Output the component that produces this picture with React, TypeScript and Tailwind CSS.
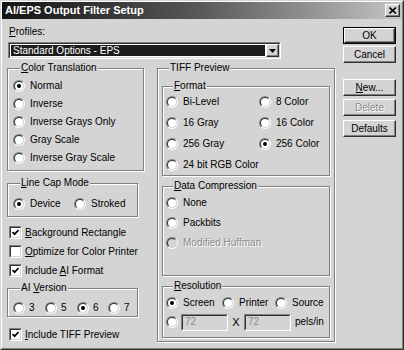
import React from 'react';

const FACE = 'bg-[#d4d4d4]';

function Radio({ checked = false, disabled = false }: { checked?: boolean; disabled?: boolean }) {
  return (
    <span className="inline-block w-[12px] h-[12px] shrink-0 rounded-full border border-t-[#808080] border-l-[#808080] border-b-white border-r-white">
      <span
        className={`flex items-center justify-center w-full h-full rounded-full border border-t-[#303030] border-l-[#303030] border-b-[#d4d4d4] border-r-[#d4d4d4] ${
          disabled ? 'bg-[#d4d4d4]' : 'bg-white'
        }`}
      >
        {checked && <span className="block w-[4px] h-[4px] rounded-full bg-black" />}
      </span>
    </span>
  );
}

function Check({ checked = false }: { checked?: boolean }) {
  return (
    <span className="inline-block w-[13px] h-[13px] shrink-0 border border-t-[#808080] border-l-[#808080] border-b-white border-r-white">
      <span className="flex items-center justify-center w-full h-full bg-white border border-t-[#303030] border-l-[#303030] border-b-[#d4d4d4] border-r-[#d4d4d4]">
        {checked && (
          <svg width="7" height="7" viewBox="0 0 7 7">
            <path d="M0.5 3 L2.6 5.2 L6.6 1" fill="none" stroke="#000" strokeWidth="1.7" />
          </svg>
        )}
      </span>
    </span>
  );
}

function U({ c }: { c: string }) {
  return <span className="underline underline-offset-[1px] decoration-[1px]">{c}</span>;
}

function RadioItem({
  label,
  checked,
  disabled,
  className = '',
}: {
  label: React.ReactNode;
  checked?: boolean;
  disabled?: boolean;
  className?: string;
}) {
  return (
    <div className={`flex items-center gap-[5px] ${className}`}>
      <Radio checked={checked} disabled={disabled} />
      <span className={disabled ? 'text-[#8c8c8c] [text-shadow:1px_1px_0_#fff]' : ''}>{label}</span>
    </div>
  );
}

function CheckItem({ label, checked }: { label: React.ReactNode; checked?: boolean }) {
  return (
    <div className="flex items-center gap-[3px] h-[19px] pl-[2px]">
      <Check checked={checked} />
      <span>{label}</span>
    </div>
  );
}

function Group({
  title,
  className = '',
  children,
}: {
  title: React.ReactNode;
  className?: string;
  children?: React.ReactNode;
}) {
  return (
    <fieldset
      className={`border border-[#808080] shadow-[inset_1px_1px_0_#fff,1px_1px_0_#fff] min-w-0 ${className}`}
    >
      <legend className={`ml-[7px] px-[1px] leading-[12px] h-[12px] ${FACE}`}>{title}</legend>
      {children}
    </fieldset>
  );
}

function Button({
  children,
  def = false,
  disabled = false,
  className = '',
}: {
  children: React.ReactNode;
  def?: boolean;
  disabled?: boolean;
  className?: string;
}) {
  const inner = (
    <div
      className={`flex items-center justify-center w-full h-full border border-t-white border-l-white border-b-[#303030] border-r-[#303030] shadow-[inset_-1px_-1px_0_#808080] ${
        disabled ? 'text-[#8c8c8c] [text-shadow:1px_1px_0_#fff]' : ''
      }`}
    >
      {children}
    </div>
  );
  return def ? (
    <div className={`w-[53px] h-[17px] border border-black ${className}`}>{inner}</div>
  ) : (
    <div className={`w-[53px] h-[17px] ${className}`}>{inner}</div>
  );
}

function Sunken({ children, className = '' }: { children?: React.ReactNode; className?: string }) {
  return (
    <div className={`border border-t-[#808080] border-l-[#808080] border-b-white border-r-white ${className}`}>
      <div className="w-full h-full border border-t-[#303030] border-l-[#303030] border-b-[#d4d4d4] border-r-[#d4d4d4]">
        {children}
      </div>
    </div>
  );
}

export default function App() {
  return (
    <div
      className={`w-[404px] h-[350px] ${FACE} text-[10px] leading-[12px] text-black font-['Liberation_Sans',Arial,sans-serif] border border-t-[#d4d4d4] border-l-[#d4d4d4] border-b-[#303030] border-r-[#303030] overflow-hidden`}
    >
      <div className="w-full h-full flex flex-col border border-t-white border-l-white border-b-[#808080] border-r-[#808080]">
        {/* Title bar */}
        <div className="h-[17px] shrink-0 flex items-center justify-between pl-[3px] pr-[2px] bg-gradient-to-r from-[#141414] via-[#5a5a5a] to-[#c6c6c6]">
          <span className="text-white font-bold text-[11px] leading-[13px]">AI/EPS Output Filter Setup</span>
          <div className="w-[15px] h-[13px] border border-t-white border-l-white border-b-[#303030] border-r-[#303030] shadow-[inset_-1px_-1px_0_#808080] bg-[#d4d4d4] flex items-center justify-center">
            <svg width="8" height="7" viewBox="0 0 8 7">
              <path d="M0.5 0.5 L7 6.5 M7 0.5 L0.5 6.5" stroke="#000" strokeWidth="1.6" />
            </svg>
          </div>
        </div>

        {/* Body */}
        <div className="flex flex-1 pl-[5px]">
          {/* Left part */}
          <div className="w-[328px] flex flex-col pt-[7px]">
            <div className="ml-[2px] h-[12px]">
              <U c="P" />
              rofiles:
            </div>
            <Sunken className="ml-[1px] mt-[4px] w-[273px] h-[17px]">
              <div className="flex h-full bg-white">
                <div className="flex-1 m-[1px] bg-[#1c1c1c] text-white pl-[2px] flex items-center">
                  Standard Options - EPS
                </div>
                <div className="w-[13px] h-full border border-t-white border-l-white border-b-[#303030] border-r-[#303030] shadow-[inset_-1px_-1px_0_#808080] bg-[#d4d4d4] flex items-center justify-center">
                  <svg width="7" height="4" viewBox="0 0 7 4">
                    <path d="M0 0 H7 L3.5 4 Z" fill="#000" />
                  </svg>
                </div>
              </div>
            </Sunken>

            <div className="flex gap-[13px] mt-[3px]">
              {/* Left column */}
              <div className="w-[137px] flex flex-col">
                <Group
                  title={
                    <>
                      <U c="C" />
                      olor Translation
                    </>
                  }
                  className="h-[109px] pl-[5px] pt-[3px]"
                >
                  <RadioItem label="Normal" checked className="h-[18px]" />
                  <RadioItem label="Inverse" className="h-[18px]" />
                  <RadioItem label="Inverse Grays Only" className="h-[18px]" />
                  <RadioItem label="Gray Scale" className="h-[18px]" />
                  <RadioItem label="Inverse Gray Scale" className="h-[18px]" />
                </Group>

                <Group
                  title={
                    <>
                      <U c="L" />
                      ine Cap Mode
                    </>
                  }
                  className="w-[131px] h-[40px] mt-[6px] pl-[5px] pt-[6px]"
                >
                  <div className="flex h-[18px]">
                    <RadioItem label="Device" checked className="w-[61px]" />
                    <RadioItem label="Stroked" />
                  </div>
                </Group>

                <div className="mt-[6px]">
                  <CheckItem
                    checked
                    label={
                      <>
                        <U c="B" />
                        ackground Rectangle
                      </>
                    }
                  />
                  <CheckItem
                    label={
                      <>
                        <U c="O" />
                        ptimize for Color Printer
                      </>
                    }
                  />
                  <CheckItem
                    checked
                    label={
                      <>
                        Include <U c="A" />I Format
                      </>
                    }
                  />
                </div>

                <Group
                  title={
                    <>
                      AI <U c="V" />
                      ersion
                    </>
                  }
                  className="w-[131px] h-[35px] mt-[2px] pl-[5px] pt-[5px]"
                >
                  <div className="flex h-[17px]">
                    <RadioItem label="3" className="w-[32px] !gap-[4px]" />
                    <RadioItem label="5" className="w-[32px] !gap-[4px]" />
                    <RadioItem label="6" checked className="w-[31px] !gap-[4px]" />
                    <RadioItem label="7" className="!gap-[4px]" />
                  </div>
                </Group>

                <div className="mt-[8px]">
                  <CheckItem
                    checked
                    label={
                      <>
                        <U c="I" />
                        nclude TIFF Preview
                      </>
                    }
                  />
                </div>
              </div>

              {/* TIFF Preview */}
              <Group title="TIFF Preview" className="w-[178px] h-[280px] px-[4px] pt-[6px]">
                <Group
                  title={
                    <>
                      <U c="F" />
                      ormat
                    </>
                  }
                  className="h-[96px] pl-[3px]"
                >
                  <div className="grid grid-cols-[93px_1fr] auto-rows-[20px] gap-y-[1px]">
                    <RadioItem label="Bi-Level" />
                    <RadioItem label="8 Color" />
                    <RadioItem label="16 Gray" />
                    <RadioItem label="16 Color" />
                    <RadioItem label="256 Gray" />
                    <RadioItem label="256 Color" checked />
                    <RadioItem label="24 bit RGB Color" />
                  </div>
                </Group>

                <Group
                  title={
                    <>
                      <U c="D" />
                      ata Compression
                    </>
                  }
                  className="h-[96px] mt-[4px] pl-[3px] pt-[1px]"
                >
                  <RadioItem label="None" className="h-[20px]" />
                  <RadioItem label="Packbits" className="h-[20px]" />
                  <RadioItem label="Modified Huffman" disabled className="h-[20px]" />
                </Group>

                <Group
                  title={
                    <>
                      <U c="R" />
                      esolution
                    </>
                  }
                  className="h-[58px] mt-[4px] pl-[3px] pt-[1px]"
                >
                  <div className="flex h-[20px]">
                    <RadioItem label="Screen" checked className="w-[56px]" />
                    <RadioItem label="Printer" className="w-[53px]" />
                    <RadioItem label="Source" />
                  </div>
                  <div className="flex items-center h-[18px]">
                    <Radio />
                    <Sunken className="ml-[3px] w-[47px] h-[17px]">
                      <div className="h-full bg-[#d4d4d4] text-[#8c8c8c] pl-[2px] flex items-center">72</div>
                    </Sunken>
                    <span className="w-[16px] text-center text-[11px]">X</span>
                    <Sunken className="w-[47px] h-[17px]">
                      <div className="h-full bg-[#d4d4d4] text-[#8c8c8c] pl-[2px] flex items-center">72</div>
                    </Sunken>
                    <span className="ml-[4px]">pels/in</span>
                  </div>
                </Group>
              </Group>
            </div>
          </div>

          {/* Right buttons */}
          <div className="ml-[8px] flex flex-col pt-[8px]">
            <Button def>OK</Button>
            <Button className="mt-[2px]">Cancel</Button>
            <Button className="mt-[16px]">
              <span>
                <U c="N" />
                ew...
              </span>
            </Button>
            <Button className="mt-[3px]" disabled>
              Delete
            </Button>
            <Button className="mt-[4px]">Defaults</Button>
          </div>
        </div>
      </div>
    </div>
  );
}
